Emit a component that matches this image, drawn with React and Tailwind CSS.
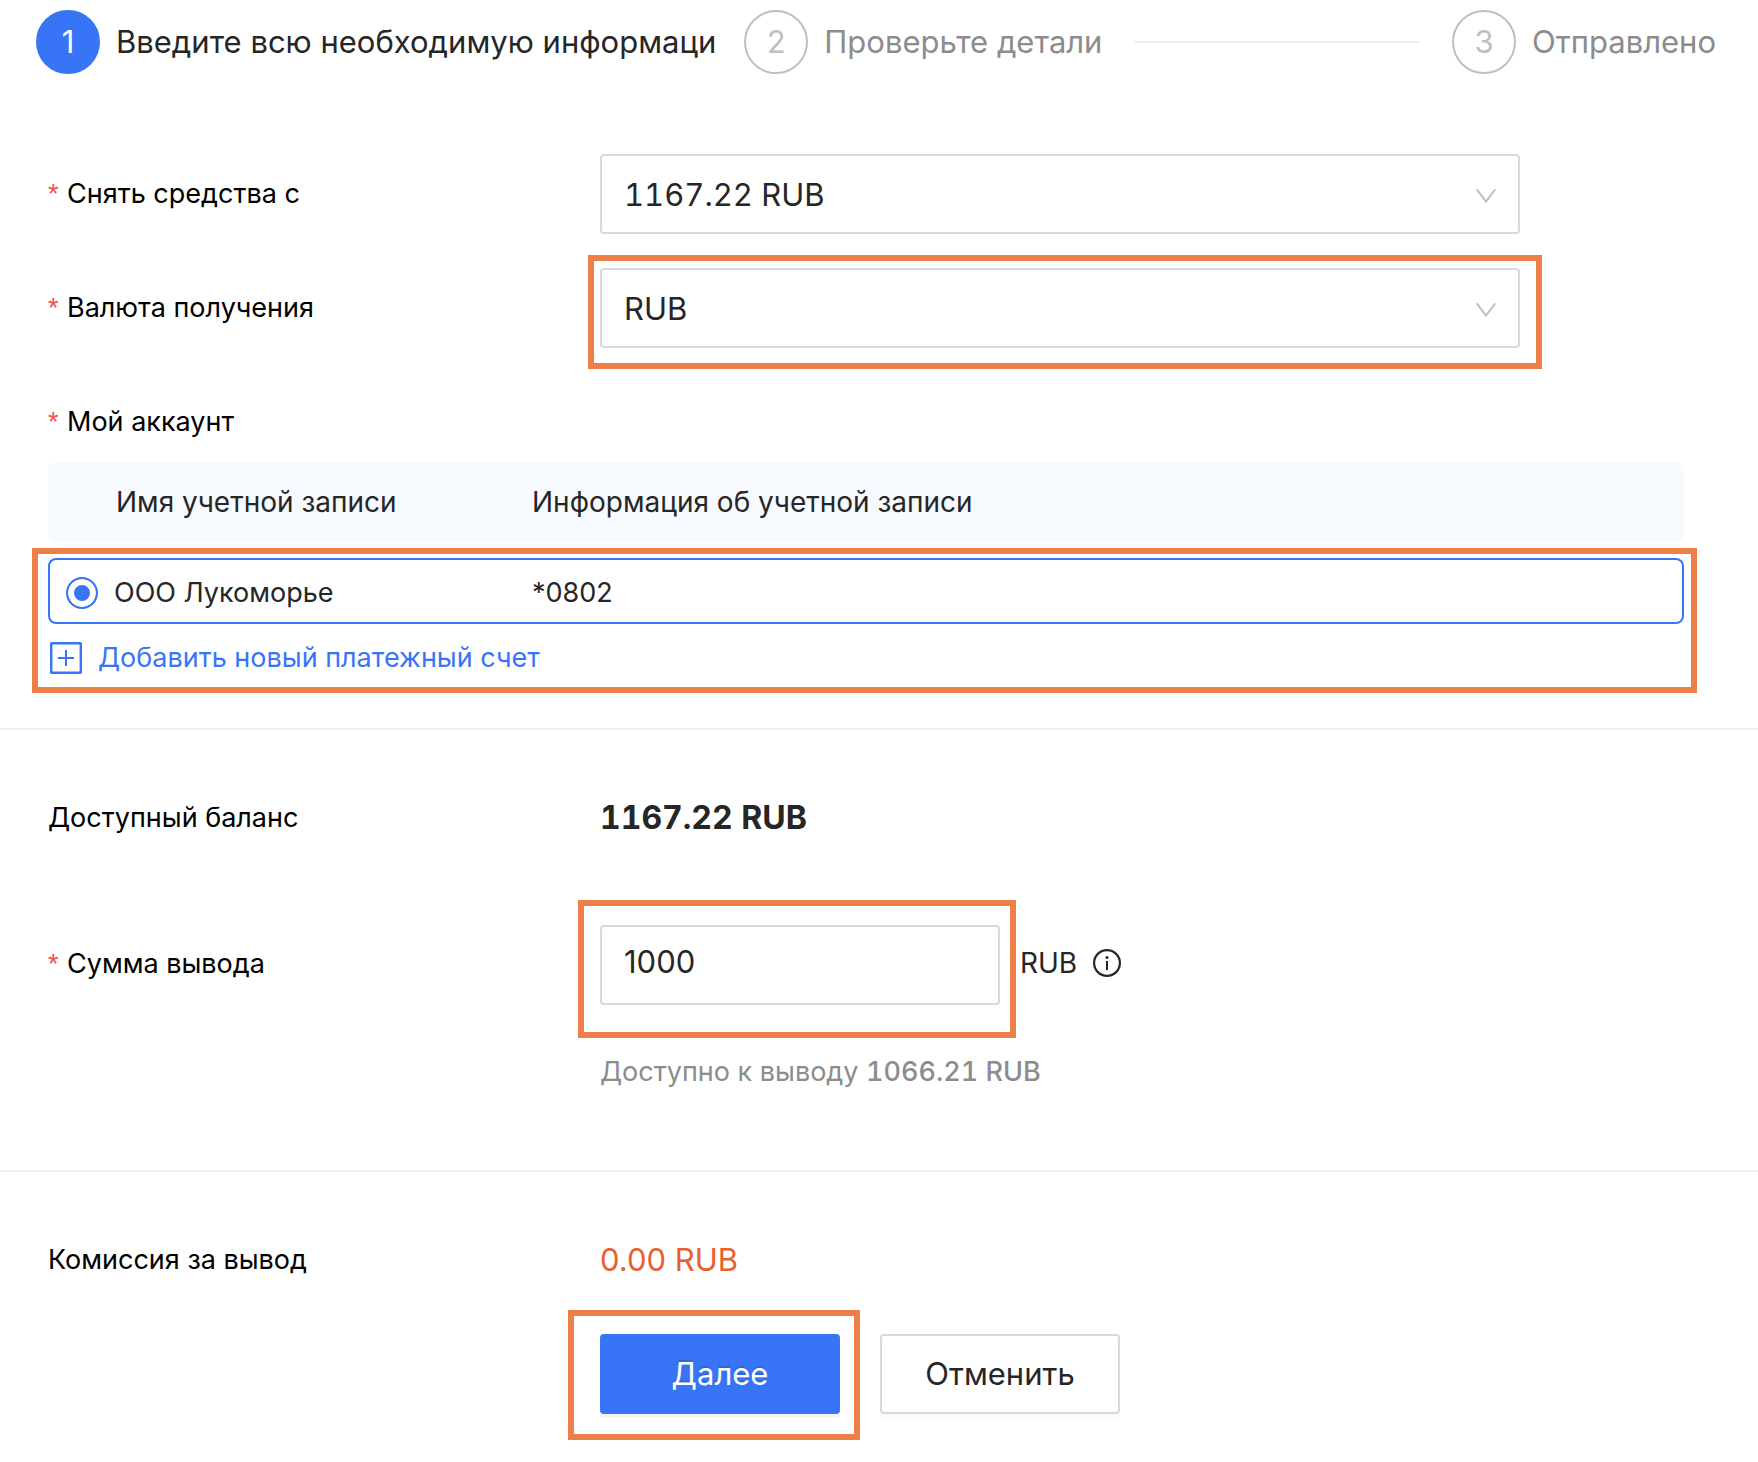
import React from "react";

function Highlight({ className }) {
  return (
    <div
      aria-hidden="true"
      className={`pointer-events-none absolute border-6 border-[#ee8047] ${className}`}
    />
  );
}

function Step({ number, title, active, children, className = "" }) {
  return (
    <li className={`flex items-center ${className}`} aria-current={active ? "step" : undefined}>
      <span
        className={`flex size-16 shrink-0 items-center justify-center rounded-full border-2 text-[31px] ${
          active
            ? "border-[#3875f6] bg-[#3875f6] text-white"
            : "border-[#bfbfbf] text-[#bfbfbf]"
        }`}
      >
        {number}
      </span>
      <span
        className={`ml-4 whitespace-nowrap text-[31px] leading-16 ${
          active ? "text-[#262626]" : "text-[#8c8c8c]"
        }`}
      >
        {title}
      </span>
      {children}
    </li>
  );
}

function FieldLabel({ htmlFor, required, children }) {
  const Tag = htmlFor ? "label" : "span";
  return (
    <Tag
      htmlFor={htmlFor}
      className="flex w-[552px] shrink-0 items-baseline text-[27px] leading-10 text-black"
    >
      {required && (
        <span className="w-[19px] font-['Liberation_Sans',sans-serif] text-[#f0524f]">*</span>
      )}
      {children}
    </Tag>
  );
}

function SelectField({ id, label, value, highlighted }) {
  return (
    <div className="flex h-20 items-center">
      <FieldLabel htmlFor={id} required>
        {label}
      </FieldLabel>
      <div className="relative w-full max-w-[920px]">
        <select
          id={id}
          defaultValue={value}
          className="block h-20 w-full appearance-none rounded-sm border-2 border-[#d9d9d9] bg-white px-[22px] pt-[2px] text-[31px] text-[#262626] tabular-nums"
        >
          <option>{value}</option>
        </select>
        <svg
          viewBox="0 0 20 14"
          className="pointer-events-none absolute top-[35px] right-6 h-[14px] w-5"
          fill="none"
          stroke="#bfbfbf"
          strokeWidth="2"
          aria-hidden="true"
        >
          <path d="M0.8 0.4 10 12.6 19.2 0.4" />
        </svg>
        {highlighted && <Highlight className="-top-[13px] -right-[22px] -bottom-[21px] -left-3" />}
      </div>
    </div>
  );
}

export default function App() {
  return (
    <main className="min-h-screen bg-white pt-[10px] pb-5 font-['Inter','Liberation_Sans',sans-serif] text-[#262626]">
      <ol className="flex gap-7 pr-[42px] pl-9">
        <Step number="1" title="Введите всю необходимую информаци" active />
        <Step number="2" title="Проверьте детали" className="flex-1">
          <span className="mr-1 ml-8 h-[2px] flex-1 bg-[#f0f0f0]" />
        </Step>
        <Step number="3" title="Отправлено" />
      </ol>

      <form onSubmit={(e) => e.preventDefault()}>
        <section className="border-b-2 border-[#f0f0f0] pt-20 pr-[74px] pb-[50px] pl-12">
          <div className="flex flex-col gap-[34px]">
            <SelectField id="source" label="Снять средства с" value="1167.22 RUB" />
            <SelectField id="currency" label="Валюта получения" value="RUB" highlighted />
            <div className="flex h-20 items-center">
              <FieldLabel required>Мой аккаунт</FieldLabel>
            </div>
          </div>

          <div className="relative">
            <table className="-mt-4 w-full border-separate border-spacing-x-0 border-spacing-y-4 text-left text-[27px]">
              <thead>
                <tr className="h-20 text-[28px]">
                  <th className="w-[484px] rounded-l-lg bg-[#f7faff] pl-[68px] font-normal">
                    Имя учетной записи
                  </th>
                  <th className="rounded-r-lg bg-[#f7faff] font-normal">
                    Информация об учетной записи
                  </th>
                </tr>
              </thead>
              <tbody>
                <tr className="h-[66px]">
                  <td className="rounded-l-lg border-2 border-r-0 border-[#3875f6] pt-1 pl-4">
                    <label className="flex items-center gap-4">
                      <input
                        type="radio"
                        name="account"
                        defaultChecked
                        className="size-8 appearance-none rounded-full border-2 border-[#3875f6] bg-[#3875f6] shadow-[inset_0_0_0_6px_white]"
                      />
                      ООО Лукоморье
                    </label>
                  </td>
                  <td className="rounded-r-lg border-2 border-l-0 border-[#3875f6] pt-1">
                    *0802
                  </td>
                </tr>
              </tbody>
            </table>
            <a
              href="#add-account"
              className="-mt-[2px] ml-[2px] inline-flex items-center gap-4 align-top text-[27px] leading-10 text-[#3875f6]"
            >
              <svg viewBox="0 0 32 32" className="size-8" fill="none" stroke="currentColor" aria-hidden="true">
                <rect x="1.2" y="1.2" width="29.6" height="29.6" rx="0.5" strokeWidth="2.4" />
                <path d="M16 8v16M8 16h16" strokeWidth="2" />
              </svg>
              Добавить новый платежный счет
            </a>
            <Highlight className="top-[102px] -right-[13px] -bottom-[15px] -left-4" />
          </div>
        </section>

        <section className="border-b-2 border-[#f0f0f0] px-12 pt-12 pb-[78px]">
          <div className="flex h-20 items-center">
            <FieldLabel>Доступный баланс</FieldLabel>
            <strong className="text-[32px] font-bold tabular-nums">1167.22 RUB</strong>
          </div>
          <div className="mt-[67px] flex h-20 items-baseline">
            <FieldLabel htmlFor="amount" required>
              Сумма вывода
            </FieldLabel>
            <div className="relative w-[400px]">
              <input
                id="amount"
                type="text"
                defaultValue="1000"
                className="block h-20 w-full rounded-sm border-2 border-[#d9d9d9] px-[22px] pb-2 text-[31px]"
              />
              <Highlight className="-top-[25px] -right-4 -bottom-[33px] -left-[22px]" />
            </div>
            <span className="ml-5 flex items-center gap-4 text-[28px] leading-10">
              RUB
              <svg viewBox="0 0 28 28" className="size-7" fill="none" stroke="#262626" aria-hidden="true">
                <circle cx="14" cy="14" r="12.9" strokeWidth="2.2" />
                <path d="M14 12v9" strokeWidth="2" />
                <circle cx="14" cy="8.5" r="1.5" fill="#262626" stroke="none" />
              </svg>
            </span>
          </div>
          <p className="mt-[47px] ml-[552px] text-[27px] leading-10 text-[#8c8c8c]">
            Доступно к выводу <span className="font-medium tabular-nums">1066.21 RUB</span>
          </p>
        </section>

        <section className="px-12 pt-12">
          <div className="flex h-20 items-center">
            <FieldLabel>Комиссия за вывод</FieldLabel>
            <output className="text-[31px] text-[#e8602f]">0.00 RUB</output>
          </div>
          <div className="mt-[34px] ml-[552px] flex gap-10">
            <div className="relative">
              <button
                type="submit"
                className="block h-20 w-60 rounded-sm bg-[#3875f6] text-[31px] text-white shadow-[0_4px_0_rgba(0,0,0,0.045)] text-shadow-[0_-2px_0_rgba(0,0,0,0.12)]"
              >
                Далее
              </button>
              <Highlight className="-top-6 -right-5 -bottom-[26px] -left-8" />
            </div>
            <button
              type="button"
              className="h-20 w-60 rounded-sm border-2 border-[#d9d9d9] bg-white text-[31px] shadow-[0_4px_0_rgba(0,0,0,0.016)]"
            >
              Отменить
            </button>
          </div>
        </section>
      </form>
    </main>
  );
}
